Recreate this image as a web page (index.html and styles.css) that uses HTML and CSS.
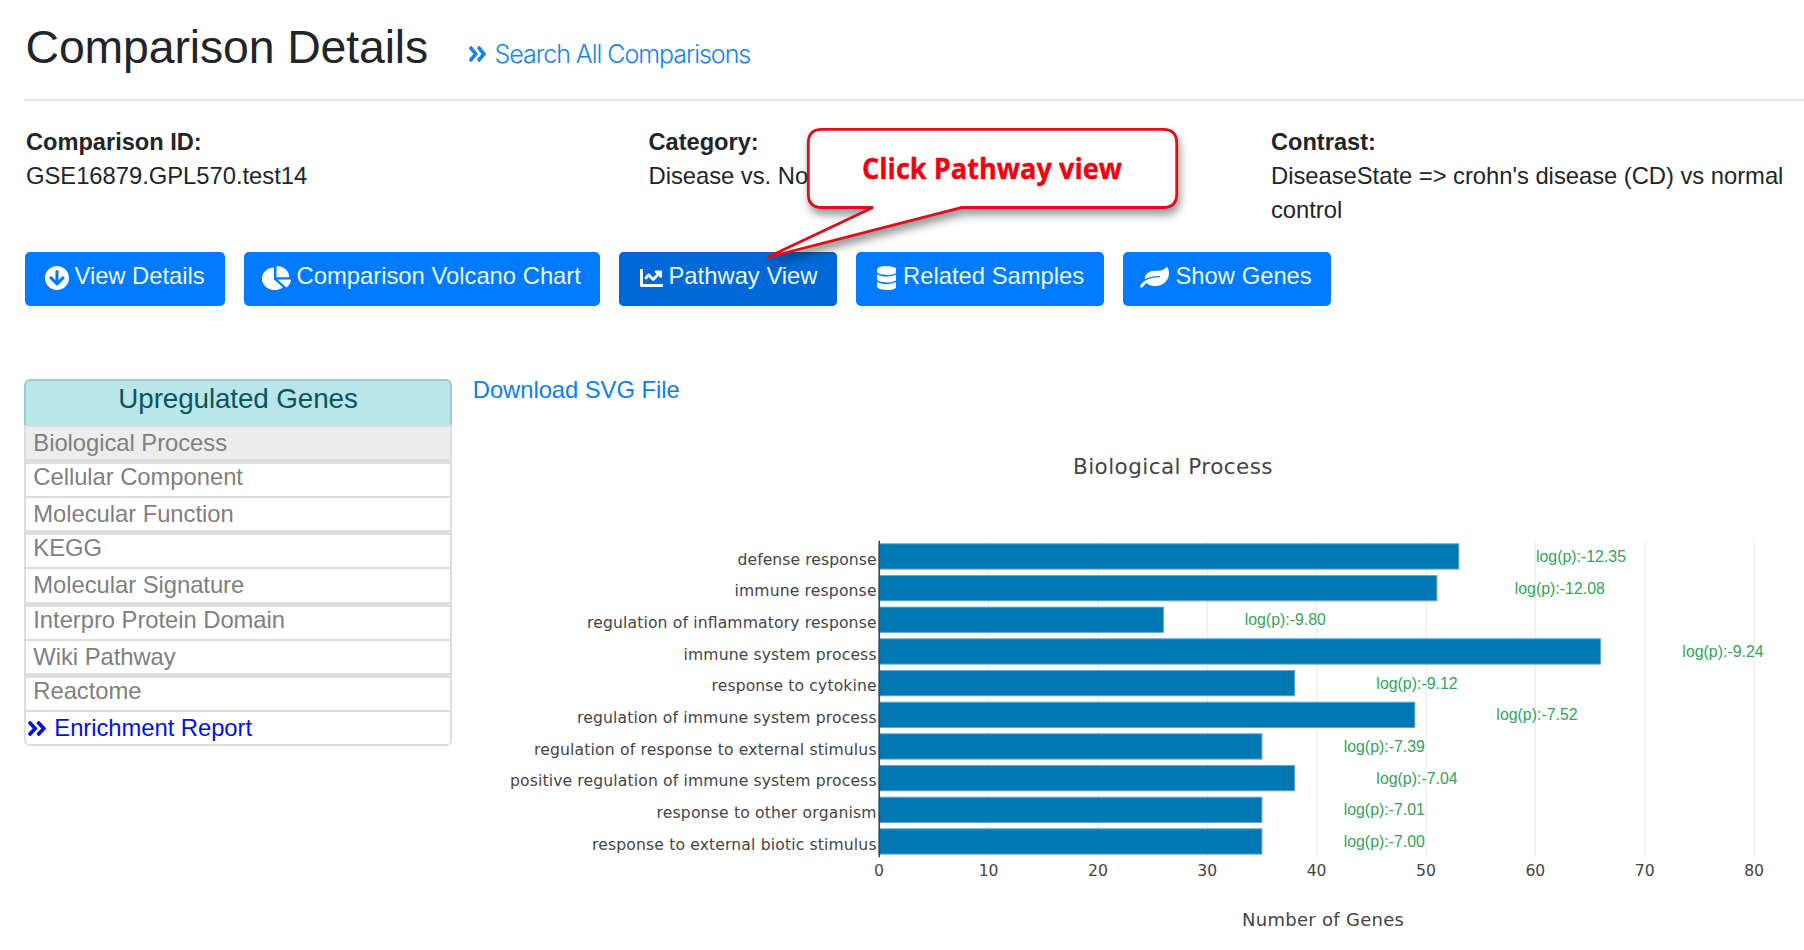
FILE: index.html
```html
<!DOCTYPE html>
<html lang="en">
<head>
<meta charset="utf-8">
<title>Comparison Details</title>
<link rel="stylesheet" href="styles.css">
</head>
<body>
<svg class="defs" width="0" height="0" aria-hidden="true">
  <symbol id="i-double-right" viewBox="24 96 400 320" preserveAspectRatio="none"><path d="M224.3 273l-136 136c-9.4 9.4-24.6 9.4-33.9 0l-22.6-22.6c-9.4-9.4-9.4-24.6 0-33.9l96.4-96.4-96.4-96.4c-9.4-9.4-9.4-24.6 0-33.9L54.3 103c9.4-9.4 24.6-9.4 33.9 0l136 136c9.5 9.4 9.5 24.6.1 34zm192-34l-136-136c-9.4-9.4-24.6-9.4-33.9 0l-22.6 22.6c-9.4 9.4-9.4 24.6 0 33.9l96.4 96.4-96.4 96.4c-9.4 9.4-9.4 24.6 0 33.9l22.6 22.6c9.4 9.4 24.6 9.4 33.9 0l136-136c9.4-9.2 9.4-24.4 0-33.8z"/></symbol>
</svg>
<header class="page-head">
  <h1>Comparison Details</h1>
  <a class="search-link"><svg class="chev" viewBox="24 96 400 320" preserveAspectRatio="none"><use href="#i-double-right" x="24" y="96" width="400" height="320"/></svg><span>Search All Comparisons</span></a>
</header>
<hr>
<section class="facts">
  <div><b>Comparison ID:</b><p>GSE16879.GPL570.test14</p></div>
  <div><b>Category:</b><p>Disease vs. Normal</p></div>
  <div><b>Contrast:</b><p>DiseaseState =&gt; crohn's disease (CD) vs normal control</p></div>
</section>
<nav class="buttons">
  <a class="btn b1"><svg viewBox="8 8 496 496" width="24" height="24"><path d="M504 256c0 137-111 248-248 248S8 393 8 256 119 8 256 8s248 111 248 248zm-143.6-28.9L288 302.6V120c0-13.3-10.7-24-24-24h-16c-13.3 0-24 10.7-24 24v182.6l-72.4-75.5c-9.3-9.7-24.8-9.9-34.3-.4l-10.9 11c-9.4 9.4-9.4 24.6 0 33.9L239 404.3c9.4 9.4 24.6 9.4 33.9 0l132.7-132.7c9.4-9.4 9.4-24.6 0-33.9l-10.9-11c-9.5-9.5-25-9.3-34.3.4z"/></svg><span>View Details</span></a>
  <a class="btn b2"><svg viewBox="0 0 544 512" preserveAspectRatio="none" width="29" height="24"><path d="M527.79 288H290.5l158.03 158.03c6.04 6.04 15.98 6.53 22.19.68 38.7-36.46 65.32-85.61 73.13-140.86 1.34-9.46-6.51-17.85-16.06-17.85zm-15.83-64.8C503.72 103.74 408.26 8.28 288.8.04 279.68-.59 272 7.1 272 16.24V240h223.77c9.14 0 16.82-7.68 16.19-16.8zM224 288V50.71c0-9.55-8.39-17.4-17.84-16.06C86.99 51.49-4.1 155.6.14 280.37 4.5 408.51 114.83 513.59 243.03 511.98c50.4-.63 96.97-16.87 135.26-44.03 7.9-5.6 8.42-17.23 1.57-24.08L224 288z"/></svg><span>Comparison Volcano Chart</span></a>
  <a class="btn b3 active"><svg viewBox="0 64 512 384" preserveAspectRatio="none" width="23.5" height="18"><path d="M496 384H64V80c0-8.84-7.16-16-16-16H16C7.16 64 0 71.16 0 80v336c0 17.67 14.33 32 32 32h464c8.84 0 16-7.16 16-16v-32c0-8.84-7.16-16-16-16zM464 96H345.94c-21.38 0-32.09 25.85-16.97 40.97l32.4 32.4L288 242.75l-73.37-73.37c-12.5-12.5-32.76-12.5-45.25 0l-68.69 68.69c-6.25 6.25-6.25 16.38 0 22.63l22.62 22.62c6.25 6.25 16.38 6.25 22.63 0L192 237.25l73.37 73.37c12.5 12.5 32.76 12.5 45.25 0l96-96 32.4 32.4c15.12 15.12 40.97 4.41 40.97-16.97V112c.01-8.84-7.15-16-15.99-16z"/></svg><span>Pathway View</span></a>
  <a class="btn b4"><svg viewBox="0 0 448 512" preserveAspectRatio="none" width="19.5" height="24"><path d="M448 73.143v45.714C448 159.143 347.667 192 224 192S0 159.143 0 118.857V73.143C0 32.857 100.333 0 224 0s224 32.857 224 73.143zM448 176v102.857C448 319.143 347.667 352 224 352S0 319.143 0 278.857V176c48.125 33.143 136.208 48.572 224 48.572S399.874 209.143 448 176zm0 160v102.857C448 479.143 347.667 512 224 512S0 479.143 0 438.857V336c48.125 33.143 136.208 48.572 224 48.572S399.874 369.143 448 336z"/></svg><span>Related Samples</span></a>
  <a class="btn b5"><svg viewBox="0 0 576 512" preserveAspectRatio="none" width="29" height="20.5"><path d="M546.2 9.7c-5.6-12.5-21.6-13-28.3-1.2C486.9 62.4 431.4 96 368 96h-80C182 96 96 182 96 288c0 7 .8 13.7 1.5 20.5C161.3 262.8 253.4 224 384 224c8.8 0 16 7.2 16 16s-7.2 16-16 16C132.6 256 26 410.1 2.4 468c-6.6 16.3 1.2 34.9 17.5 41.6 16.4 6.8 35-1.1 41.8-17.3 1.5-3.6 20.9-47.9 71.9-90.6 32.4 43.9 94 85.8 174.9 77.2C465.5 467.5 576 326.7 576 154.3c0-50.2-10.8-102.2-29.8-144.6z"/></svg><span>Show Genes</span></a>
</nav>
<main class="main">
  <aside class="panel">
    <h2>Upregulated Genes</h2>
    <ul>
      <li class="even first">Biological Process</li>
      <li class="odd">Cellular Component</li>
      <li class="even">Molecular Function</li>
      <li class="odd">KEGG</li>
      <li class="even">Molecular Signature</li>
      <li class="odd">Interpro Protein Domain</li>
      <li class="even">Wiki Pathway</li>
      <li class="odd">Reactome</li>
      <li class="even report"><svg class="chev2" viewBox="24 96 400 320" preserveAspectRatio="none"><use href="#i-double-right" x="24" y="96" width="400" height="320"/></svg><span>Enrichment Report</span></li>
    </ul>
  </aside>
  <section class="chart">
    <a class="download">Download SVG File</a>
    <svg class="plot" width="1333" height="530" viewBox="471 420 1333 530">
      <text class="ct" x="1073" y="474" textLength="199.5">Biological Process</text>
      <g class="grid"><path d="M988.4 540.7V857M1097.8 540.7V857M1207.2 540.7V857M1316.6 540.7V857M1426 540.7V857M1535.3 540.7V857M1644.7 540.7V857M1754.1 540.7V857"/></g>
      <g class="bars">
        <rect x="879" y="543.8" width="579.8" height="25.3"/>
        <rect x="879" y="575.5" width="557.9" height="25.3"/>
        <rect x="879" y="607.1" width="284.4" height="25.3"/>
        <rect x="879" y="638.8" width="721.6" height="25.3"/>
        <rect x="879" y="670.5" width="415.7" height="25.3"/>
        <rect x="879" y="702.2" width="535.8" height="25.3"/>
        <rect x="879" y="733.8" width="382.9" height="25.3"/>
        <rect x="879" y="765.5" width="415.7" height="25.3"/>
        <rect x="879" y="797.2" width="382.9" height="25.3"/>
        <rect x="879" y="828.8" width="382.9" height="25.3"/>
      </g>
      <path class="axis" d="M879.3 540.7V857.3"/>
      <g class="names">
        <text x="737.5" y="564.5" textLength="139">defense response</text>
        <text x="734.5" y="596.2" textLength="142">immune response</text>
        <text x="587" y="627.9" textLength="289.5">regulation of inflammatory response</text>
        <text x="683.5" y="659.6" textLength="193">immune system process</text>
        <text x="711.5" y="691.3" textLength="165">response to cytokine</text>
        <text x="577" y="723" textLength="299.5">regulation of immune system process</text>
        <text x="534" y="754.7" textLength="342.5">regulation of response to external stimulus</text>
        <text x="510" y="786.4" textLength="366.5">positive regulation of immune system process</text>
        <text x="656.5" y="818" textLength="220">response to other organism</text>
        <text x="592" y="849.7" textLength="284.5">response to external biotic stimulus</text>
      </g>
      <g class="logs">
        <text x="1581" y="561.8">log(p):-12.35</text>
        <text x="1559.8" y="593.5">log(p):-12.08</text>
        <text x="1285.3" y="625.2">log(p):-9.80</text>
        <text x="1723" y="656.8">log(p):-9.24</text>
        <text x="1417" y="688.5">log(p):-9.12</text>
        <text x="1537" y="720.4">log(p):-7.52</text>
        <text x="1384.3" y="752">log(p):-7.39</text>
        <text x="1417" y="783.7">log(p):-7.04</text>
        <text x="1384.3" y="815.4">log(p):-7.01</text>
        <text x="1384.3" y="847">log(p):-7.00</text>
      </g>
      <g class="ticks">
        <text x="879" y="876">0</text><text x="988.6" y="876">10</text><text x="1098" y="876">20</text><text x="1207.2" y="876">30</text><text x="1316.6" y="876">40</text><text x="1426" y="876">50</text><text x="1535.3" y="876">60</text><text x="1644.7" y="876">70</text><text x="1754.1" y="876">80</text>
      </g>
      <text class="xt" x="1242" y="925.5" textLength="162">Number of Genes</text>
    </svg>
  </section>
</main>
<div class="callout">
  <svg width="400" height="150" viewBox="800 120 400 150">
    <path d="M822 129.3H1163Q1176.7 129.3 1176.7 143V194Q1176.7 207.5 1163 207.5H962L767 257.5L873 207.5H822Q808.3 207.5 808.3 194V143Q808.3 129.3 822 129.3Z"/>
    <text x="862" y="178.7" textLength="260" lengthAdjust="spacingAndGlyphs">Click Pathway view</text>
  </svg>
</div>
</body>
</html>
```
FILE: styles.css
```css
* { box-sizing: border-box; }
body {
  margin: 0;
  width: 1804px;
  height: 950px;
  overflow: hidden;
  position: relative;
  background: #fff;
  color: #212529;
  font: 23.8px/34.4px "Liberation Sans", Arial, sans-serif;
}
.defs { position: absolute; }
h1, h2, p, ul { margin: 0; padding: 0; font-weight: 400; }
.page-head {
  height: 99px;
  padding: 17px 0 0 25.5px;
  display: flex;
  align-items: flex-start;
}
h1 { font-size: 46.4px; line-height: 60px; letter-spacing: -0.12px; white-space: nowrap; width: 443px; }
.search-link {
  display: flex;
  align-items: center;
  gap: 9px;
  margin-top: 20px;
  color: #1583ee;
  font-family: Inter, "Liberation Sans", sans-serif;
  font-weight: 300;
  font-size: 25px;
  letter-spacing: -1.03px;
  white-space: nowrap;
}
.chev { width: 17px; height: 16px; fill: #1583ee; }
hr { margin: 0 0 0 24px; border: 0; height: 2px; background: #e8e8e8; }
.facts {
  display: grid;
  grid-template-columns: 622.5px 622.5px 538px;
  padding: 24px 0 0 26px;
  height: 151px;
}
.facts p { letter-spacing: -0.03px; line-height: 34px; }
.facts b { display: block; font-size: 23.6px; }
.buttons { display: flex; gap: 18.5px; padding-left: 24.5px; }
.btn {
  display: flex;
  align-items: flex-start;
  height: 53.5px;
  border-radius: 5px;
  background: #007bff;
  color: #fff;
  padding-top: 7px;
  white-space: nowrap;
  line-height: 34px;
}
.btn svg { fill: #fff; flex: none; align-self: flex-start; margin-top: 6.5px; }
.btn span { color: #eaf8ff; }
.b1 { width: 200.5px; padding-left: 20.5px; } .b1 span { margin-left: 5.5px; letter-spacing: -0.04px; }
.b2 { width: 356.5px; padding-left: 18.5px; } .b2 span { margin-left: 5.5px; }
.b3 { width: 218.5px; padding-left: 21px; } .b3 span { margin-left: 5.5px; }
.b3 svg { margin-top: 10px; }
.b4 { width: 248.5px; padding-left: 21px; } .b4 span { margin-left: 7px; }
.b5 { width: 208.5px; padding-left: 17.5px; } .b5 span { margin-left: 6.5px; }
.b5 svg { margin-top: 8px; }
.active { background: #0069d9; box-shadow: inset 0 0 0 1px #0062cc; }
.main { display: grid; grid-template-columns: 427.5px 1fr; column-gap: 19px; padding: 73.8px 0 0 24.3px; }
.panel { height: 367px; border-radius: 6px; }
.panel h2 {
  height: 45.7px;
  padding-top: 1px;
  border: 2px solid #9fc9cd;
  border-bottom: 0;
  border-radius: 6px 6px 0 0;
  background: #b9e6e8;
  color: #0c5460;
  text-align: center;
  font-size: 27.8px;
  letter-spacing: -0.1px;
  line-height: 34px;
}
.panel ul {
  list-style: none;
  border: 2px solid #ddd;
  border-radius: 0 0 6px 6px;
  color: #808080;
}
.panel li { height: 32px; padding-left: 7px; line-height: 32px; letter-spacing: -0.04px; white-space: nowrap; }
.panel .odd { border-top: 5px solid #ddd; height: 37px; line-height: 26.5px; }
.panel .even { border-top: 2.3px solid #ddd; height: 34.3px; }
.panel .first { border-top: 0; height: 32px; background: #ededed; }
.panel .report { display: flex; align-items: center; gap: 8px; padding-left: 2px; color: #0012e0; }
.chev2 { width: 18px; height: 15px; fill: #0012e0; }
.chart { display: flex; flex-direction: column; height: 571px; }
.download { color: #0a80f0; height: 40.7px; line-height: 21.6px; padding-left: 2px; letter-spacing: -0.05px; flex: none; }
.plot { display: block; flex: none; }
.plot text { font-family: "DejaVu Sans", Verdana, sans-serif; fill: #444; }
.plot .ct { font-size: 21.5px; }
.plot .xt { font-size: 18px; }
.names text { font-size: 15.6px; }
.ticks text { font-size: 15.6px; text-anchor: middle; }
.plot .logs text { font-family: "Liberation Sans", Arial, sans-serif; font-size: 15.9px; text-anchor: middle; fill: #31a35a; }
.bars rect { fill: #0078b3; stroke: #5fa8ce; stroke-width: 1; }
.grid path { stroke: #eee; stroke-width: 1.5; fill: none; }
.axis { stroke: #444; stroke-width: 1.6; }
.callout { position: absolute; left: 760px; top: 120px; }
.callout svg { display: block; overflow: visible; margin-left: 40px; }
.callout path { fill: #fff; stroke: #e30b17; stroke-width: 2.8; filter: drop-shadow(2px 6px 4px rgba(0, 0, 0, .4)); }
.callout text { font-family: "Open Sans", Lato, sans-serif; font-weight: 700; font-size: 28.5px; fill: #f4000f; stroke: #f4000f; stroke-width: .4; }
```
